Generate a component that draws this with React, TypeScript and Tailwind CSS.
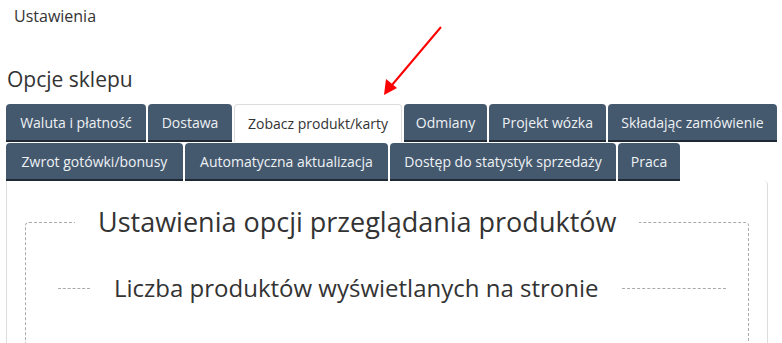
import { useState } from 'react';

// widths taken from the reference so the rows line up
const tabs = [
  [
    { label: 'Waluta i płatność', w: 'w-[140px]' },
    { label: 'Dostawa', w: 'w-[84px]' },
    { label: 'Zobacz produkt/karty', w: 'w-[168px]' },
    { label: 'Odmiany', w: 'w-[83px]' },
    { label: 'Projekt wózka', w: 'w-[117px]' },
    { label: 'Składając zamówienie', w: 'w-[169px]' },
  ],
  [
    { label: 'Zwrot gotówki/bonusy', w: 'w-[177px]' },
    { label: 'Automatyczna aktualizacja', w: 'w-[203px]' },
    { label: 'Dostęp do statystyk sprzedaży', w: 'w-[226px]' },
    { label: 'Praca', w: 'w-[62px]' },
  ],
];

const App = () => {
  const [active, setActive] = useState('Zobacz produkt/karty');

  return (
    <div className="relative w-[782px] h-[343px] overflow-hidden bg-white text-[#333] font-['Open_Sans',sans-serif]">
      {/* Breadcrumb */}
      <div className="pl-[14px] pt-[5px] text-[16px] leading-[22px]">Ustawienia</div>

      <h2 className="pl-[7px] mt-[39px] text-[21px] leading-[26px]">Opcje sklepu</h2>

      {/* Tabs */}
      <div className="mt-[12px] ml-[6px] w-[774px] flex flex-col gap-[1px]">
        {tabs.map((row, i) => (
          <div key={i} className="flex gap-[2px]">
            {row.map((t) => {
              const isActive = t.label === active;
              return (
                <button
                  key={t.label}
                  onClick={() => setActive(t.label)}
                  className={
                    isActive
                      ? `${t.w} h-[38px] text-[14px] rounded-t-[4px] bg-white text-[#333] border border-b-0 border-[#ddd] whitespace-nowrap`
                      : `${t.w} h-[38px] text-[14px] rounded-t-[4px] bg-[#45596e] text-[#eef2f5] border-b-2 border-[#1e2935] whitespace-nowrap`
                  }
                >
                  {t.label}
                </button>
              );
            })}
          </div>
        ))}
      </div>

      {/* Panel */}
      <div className="ml-[6px] w-[762px] h-[200px] border border-t-0 border-[#ddd] rounded-tr-[4px] px-[18px] pt-[25px]">
        <fieldset className="border border-dashed border-[#aaa] rounded-[4px] h-[200px]">
          <legend className="ml-[49px] px-[23px] text-[27px] leading-[32px] text-[#333]">
            Ustawienia opcji przeglądania produktów
          </legend>
          <div className="mt-[35px] ml-[32px] mr-[22px] flex items-center">
            <div className="w-[32px] border-t border-dashed border-[#aaa]" />
            <div className="px-[24px] text-[24px] leading-[30px]">Liczba produktów wyświetlanych na stronie</div>
            <div className="flex-1 border-t border-dashed border-[#aaa]" />
          </div>
        </fieldset>
      </div>

      {/* Annotation arrow */}
      <svg className="absolute left-0 top-0 pointer-events-none" width="782" height="343">
        <line x1="441" y1="27" x2="392" y2="85" stroke="#f00" strokeWidth="2" />
        <polygon points="384,95 386,79 397,88" fill="#f00" />
      </svg>
    </div>
  );
};

export default App;
